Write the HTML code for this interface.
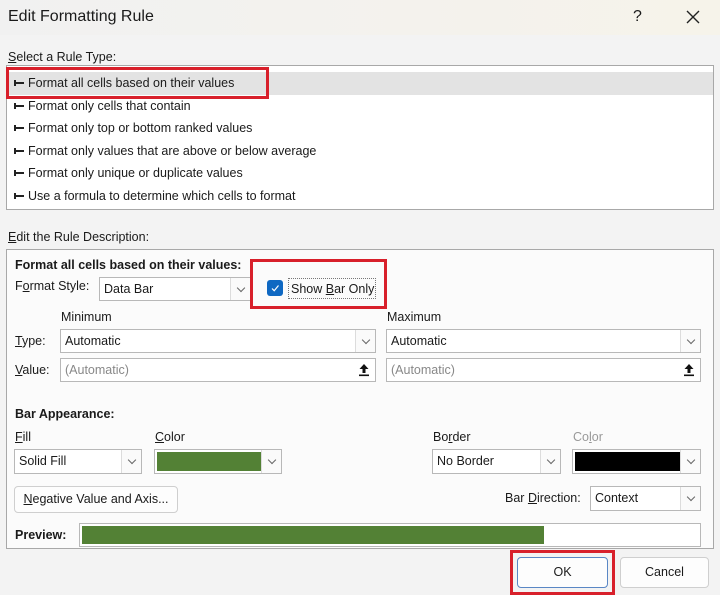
<!DOCTYPE html><html><head><style>
*{box-sizing:border-box;margin:0;padding:0}
body{width:720px;height:595px;background:#f3f3f3;font-family:"Liberation Sans",sans-serif;font-size:12.5px;color:#1a1a1a;position:relative;overflow:hidden}
.a{position:absolute;white-space:nowrap}
.box{position:absolute;background:#fff;border:1px solid #a8a8a8}
.dd{position:absolute;background:#fff;border:1px solid #b8b8b8}
.dd .t{position:absolute;left:4px;top:4px}
.dd .ar{position:absolute;right:0;top:0;bottom:0;width:20px;border-left:1px solid #dcdcdc;background:#fafafa}
.dd .ar:after{content:"";position:absolute;left:7px;top:7px;width:5px;height:5px;border-right:1px solid #666;border-bottom:1px solid #666;transform:rotate(45deg)}
.red{position:absolute;border:3px solid #d8202b}
.btn{position:absolute;background:#fdfdfd;border:1px solid #cfcfcf;border-radius:4px;text-align:center}
u{text-decoration:underline}
.row{position:absolute;left:8px;height:22px;line-height:22px;padding-left:20px}
.row:before{content:"";position:absolute;left:7px;top:10px;width:9px;height:2px;background:#222}
.row:after{content:"";position:absolute;left:6px;top:8px;width:2px;height:6px;background:#222}
.up{position:absolute;right:5px;top:4px}
</style></head><body>
<div class="a" style="left:0;top:0;width:720px;height:35px;background:linear-gradient(90deg,#f1f1f1,#f6f3ea)"></div>
<div class="a" style="left:8px;top:8px;font-size:16px">Edit Formatting Rule</div>
<div class="a" style="left:633px;top:8px;font-size:16px">?</div>
<svg class="a" style="left:686px;top:10px" width="14" height="14"><path d="M1 1L13 13M13 1L1 13" stroke="#222" stroke-width="1.4"/></svg>
<div class="a" style="left:8px;top:50px"><u>S</u>elect a Rule Type:</div>
<div class="box" style="left:6px;top:65px;width:708px;height:145px"></div>
<div class="a" style="left:7px;top:72px;width:706px;height:23px;background:#e3e3e3"></div>
<div class="row" style="top:72px">Format all cells based on their values</div>
<div class="row" style="top:95px">Format only cells that contain</div>
<div class="row" style="top:117px">Format only top or bottom ranked values</div>
<div class="row" style="top:140px">Format only values that are above or below average</div>
<div class="row" style="top:162px">Format only unique or duplicate values</div>
<div class="row" style="top:185px">Use a formula to determine which cells to format</div>
<div class="red" style="left:6px;top:67px;width:263px;height:32px"></div>
<div class="a" style="left:8px;top:230px"><u>E</u>dit the Rule Description:</div>
<div class="box" style="left:6px;top:249px;width:708px;height:300px;background:#fbfbfb"></div>
<div class="a" style="left:15px;top:258px;font-weight:bold">Format all cells based on their values:</div>
<div class="a" style="left:15px;top:279px">F<u>o</u>rmat Style:</div>
<div class="dd" style="left:99px;top:277px;width:152px;height:24px"><span class="t">Data Bar</span><span class="ar"></span></div>
<div class="a" style="left:267px;top:280px;width:16px;height:16px;background:#0f68c2;border-radius:3px"></div>
<svg class="a" style="left:269px;top:282px" width="12" height="12"><path d="M3 6.5L5.2 8.7L9.5 3.5" stroke="#fff" stroke-width="1.2" fill="none"/></svg>
<div class="a" style="left:288px;top:278px;width:88px;height:21px;border:1px dotted #777;padding:3px 2px">Show <u>B</u>ar Only</div>
<div class="red" style="left:250px;top:259px;width:137px;height:50px"></div>
<div class="a" style="left:61px;top:310px">Minimum</div>
<div class="a" style="left:387px;top:310px">Maximum</div>
<div class="a" style="left:15px;top:334px"><u>T</u>ype:</div>
<div class="a" style="left:15px;top:363px"><u>V</u>alue:</div>
<div class="dd" style="left:60px;top:329px;width:316px;height:24px"><span class="t">Automatic</span><span class="ar"></span></div>
<div class="dd" style="left:386px;top:329px;width:315px;height:24px"><span class="t">Automatic</span><span class="ar"></span></div>
<div class="dd" style="left:60px;top:358px;width:316px;height:24px;color:#888"><span class="t">(Automatic)</span><svg class="up" width="12" height="14"><path d="M6 1L1.5 6H4.5V10H7.5V6H10.5Z" fill="#111"/><rect x="1" y="11.5" width="10" height="1.6" fill="#111"/></svg></div>
<div class="dd" style="left:386px;top:358px;width:315px;height:24px;color:#888"><span class="t">(Automatic)</span><svg class="up" width="12" height="14"><path d="M6 1L1.5 6H4.5V10H7.5V6H10.5Z" fill="#111"/><rect x="1" y="11.5" width="10" height="1.6" fill="#111"/></svg></div>
<div class="a" style="left:15px;top:407px;font-weight:bold">Bar Appearance:</div>
<div class="a" style="left:15px;top:430px"><u>F</u>ill</div>
<div class="a" style="left:155px;top:430px"><u>C</u>olor</div>
<div class="a" style="left:433px;top:430px">Bo<u>r</u>der</div>
<div class="a" style="left:573px;top:430px;color:#999">Co<u>l</u>or</div>
<div class="dd" style="left:14px;top:449px;width:128px;height:25px"><span class="t">Solid Fill</span><span class="ar"></span></div>
<div class="dd" style="left:154px;top:449px;width:128px;height:25px"><span class="a" style="left:2px;top:2px;width:104px;height:19px;background:#538135"></span><span class="ar"></span></div>
<div class="dd" style="left:432px;top:449px;width:129px;height:25px"><span class="t">No Border</span><span class="ar"></span></div>
<div class="dd" style="left:572px;top:449px;width:129px;height:25px"><span class="a" style="left:2px;top:2px;width:105px;height:19px;background:#000"></span><span class="ar"></span></div>
<div class="btn" style="left:14px;top:486px;width:164px;height:27px;line-height:25px"><u>N</u>egative Value and Axis...</div>
<div class="a" style="left:505px;top:491px">Bar <u>D</u>irection:</div>
<div class="dd" style="left:590px;top:486px;width:111px;height:25px"><span class="t">Context</span><span class="ar"></span></div>
<div class="a" style="left:15px;top:528px;font-weight:bold">Preview:</div>
<div class="dd" style="left:79px;top:523px;width:622px;height:24px"><span class="a" style="left:2px;top:2px;width:462px;height:18px;background:#538135"></span></div>
<div class="btn" style="left:517px;top:557px;width:91px;height:31px;line-height:29px;border:1px solid #5a87c5">OK</div>
<div class="red" style="left:510px;top:550px;width:105px;height:45px"></div>
<div class="btn" style="left:620px;top:557px;width:89px;height:31px;line-height:29px">Cancel</div>
</body></html>
